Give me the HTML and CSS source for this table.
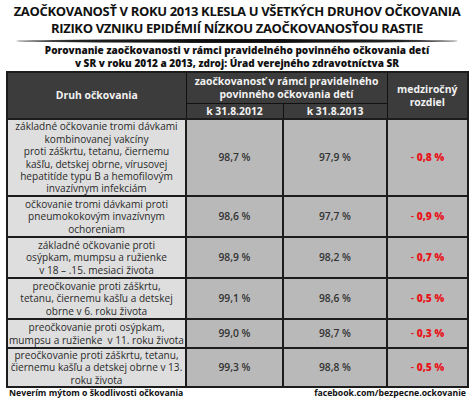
FILE: index.html
```html
<!DOCTYPE html>
<html lang="sk">
<head>
<meta charset="utf-8">
<link rel="stylesheet" href="styles.css">
</head>
<body>
<div class="page">
  <h1 class="title">ZAOČKOVANOSŤ V ROKU 2013 KLESLA U VŠETKÝCH DRUHOV OČKOVANIA<br>RIZIKO VZNIKU EPIDÉMIÍ NÍZKOU ZAOČKOVANOSŤOU RASTIE</h1>
  <div class="shadow"></div>
  <p class="subtitle">Porovnanie zaočkovanosti v rámci pravidelného povinného očkovania detí<br>v SR v roku 2012 a 2013, zdroj: Úrad verejného zdravotníctva SR</p>
  <table class="data">
    <colgroup>
      <col class="c1"><col class="c2"><col class="c3"><col class="c4">
    </colgroup>
    <thead>
      <tr class="hA">
        <th rowspan="2">Druh očkovania</th>
        <th colspan="2">zaočkovanosť v rámci pravidelného<br>povinného očkovania detí</th>
        <th rowspan="2">medziročný<br>rozdiel</th>
      </tr>
      <tr class="hB">
        <th>k 31.8.2012</th>
        <th>k 31.8.2013</th>
      </tr>
    </thead>
    <tbody>
      <tr class="r1">
        <td class="name">základné očkovanie tromi dávkami<br>kombinovanej vakcíny<br>proti záškrtu, tetanu, čiernemu<br>kašľu, detskej obrne, vírusovej<br>hepatitíde typu B a hemofilovým<br>invazívnym infekciám</td>
        <td class="num">98,7 %</td><td class="num">97,9 %</td>
        <td class="diff"><span class="m">- </span>0,8 %</td>
      </tr>
      <tr class="r2">
        <td class="name">očkovanie tromi dávkami proti<br>pneumokokovým invazívnym<br>ochoreniam</td>
        <td class="num">98,6 %</td><td class="num">97,7 %</td>
        <td class="diff"><span class="m">- </span>0,9 %</td>
      </tr>
      <tr class="r3">
        <td class="name">základné očkovanie proti<br>osýpkam, mumpsu a ružienke<br>v 18 – .15. mesiaci života</td>
        <td class="num">98,9 %</td><td class="num">98,2 %</td>
        <td class="diff"><span class="m">- </span>0,7 %</td>
      </tr>
      <tr class="r4">
        <td class="name">preočkovanie proti záškrtu,<br>tetanu, čiernemu kašľu a detskej<br>obrne v 6. roku života</td>
        <td class="num">99,1 %</td><td class="num">98,6 %</td>
        <td class="diff"><span class="m">- </span>0,5 %</td>
      </tr>
      <tr class="r5">
        <td class="name">preočkovanie proti osýpkam,<br>mumpsu a ružienke&nbsp; v 11. roku života</td>
        <td class="num">99,0 %</td><td class="num">98,7 %</td>
        <td class="diff"><span class="m">- </span>0,3 %</td>
      </tr>
      <tr class="r6">
        <td class="name">preočkovanie proti záškrtu, tetanu,<br>čiernemu kašľu a detskej obrne v 13.<br>roku života</td>
        <td class="num">99,3 %</td><td class="num">98,8 %</td>
        <td class="diff"><span class="m">- </span>0,5 %</td>
      </tr>
    </tbody>
  </table>
  <div class="footer">
    <span>Neverím mýtom o škodlivosti očkovania</span>
    <span>facebook.com/bezpecne.ockovanie</span>
  </div>
</div>
</body>
</html>
```
FILE: styles.css
```css
html, body {
  margin: 0;
  padding: 0;
  background: #ffffff;
}
body {
  font-family: "Open Sans", "Liberation Sans", sans-serif;
  color: #1a1a1a;
}
.page {
  width: 474px;
  height: 400px;
  overflow: hidden;
  padding-top: 3px;
  box-sizing: border-box;
}
.title {
  margin: 0;
  font-weight: 700;
  font-size: 13px;
  line-height: 17px;
  text-align: center;
  letter-spacing: -0.35px;
  color: #111;
}
.shadow {
  height: 4px;
  margin: 2px 16px 0;
  border-radius: 50%;
  background: radial-gradient(ellipse at center, #000 0%, #222 55%, rgba(0,0,0,0.25) 85%, rgba(0,0,0,0) 100%);
}
.subtitle {
  margin: 1px 0 1px;
  font-weight: 800;
  font-size: 10px;
  line-height: 13px;
  text-align: center;
  color: #111;
}
.data {
  margin-left: 6px;
  width: 461px;
  border-collapse: collapse;
  table-layout: fixed;
  border: 2px solid #1c1c1c;
}
.c1 { width: 179px; }
.c2 { width: 97px; }
.c3 { width: 104px; }
.c4 { width: 81px; }
.data th {
  background: #3c3c3c;
  color: #f2f2f2;
  font-weight: 700;
  font-size: 10.4px;
  line-height: 13px;
  border: 1px solid #111;
  padding: 0;
  text-align: center;
  vertical-align: middle;
  white-space: nowrap;
}
.hA th { height: 30px; }
.hB th { height: 14px; }
.data td {
  border: 2px solid #1c1c1c;
  padding: 0;
  text-align: center;
  vertical-align: middle;
  font-size: 10.1px;
  line-height: 12.4px;
  white-space: nowrap;
}
.data td.name {
  background: #dedede;
  color: #2a2a2a;
}
.data td.num {
  background: #b9b9b9;
  color: #333;
  font-weight: 600;
  font-size: 10.3px;
}
.data td.diff {
  background: #b9b9b9;
  color: #e8141b;
  font-weight: 800;
  font-size: 10.3px;
}
.diff .m { font-weight: 600; }
.r1 td { height: 75px; }
.r2 td { height: 39px; }
.r3 td { height: 39px; }
.r4 td { height: 39px; }
.r5 td { height: 27px; }
.r6 td { height: 37px; }
.footer {
  display: flex;
  justify-content: space-between;
  padding: 0 8px 0 9px;
  font-weight: 700;
  font-size: 8.7px;
  line-height: 11px;
  color: #111;
}
```
